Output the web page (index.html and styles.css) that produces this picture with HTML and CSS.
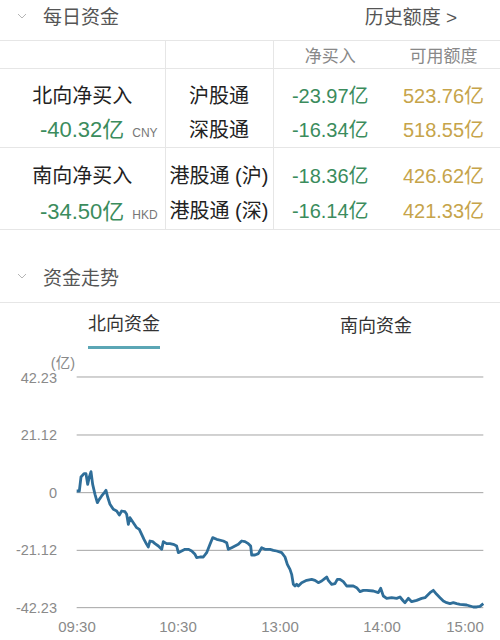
FILE: index.html
```html
<!DOCTYPE html>
<html lang="zh-CN">
<head>
    <meta charset="UTF-8">
    <meta name="viewport" content="width=device-width, initial-scale=1.0">
    <title>每日资金</title>
    <link rel="stylesheet" href="styles.css">
</head>
<body>
    <div class="section-head first">
        <svg class="chevron" width="10" height="6" viewBox="0 0 10 6"><polyline points="1,1 5,5 9,1"/></svg>
        <span class="title">每日资金</span>
        <span class="more">历史额度 &gt;</span>
    </div>

    <table class="flow">
        <colgroup>
            <col class="c1"><col class="c2"><col class="c3"><col class="c4">
        </colgroup>
        <thead>
            <tr>
                <th></th>
                <th></th>
                <th>净买入</th>
                <th>可用额度</th>
            </tr>
        </thead>
        <tbody>
            <tr class="north">
                <td class="dir">
                    <div>北向净买入</div>
                    <div class="green">-40.32亿<span class="cur">CNY</span></div>
                </td>
                <td class="name">
                    <div>沪股通</div>
                    <div>深股通</div>
                </td>
                <td class="green">
                    <div>-23.97亿</div>
                    <div>-16.34亿</div>
                </td>
                <td class="gold">
                    <div>523.76亿</div>
                    <div>518.55亿</div>
                </td>
            </tr>
            <tr class="south">
                <td class="dir">
                    <div>南向净买入</div>
                    <div class="green">-34.50亿<span class="cur">HKD</span></div>
                </td>
                <td class="name">
                    <div>港股通 (沪)</div>
                    <div>港股通 (深)</div>
                </td>
                <td class="green">
                    <div>-18.36亿</div>
                    <div>-16.14亿</div>
                </td>
                <td class="gold">
                    <div>426.62亿</div>
                    <div>421.33亿</div>
                </td>
            </tr>
        </tbody>
    </table>

    <div class="section-head second">
        <svg class="chevron" width="10" height="6" viewBox="0 0 10 6"><polyline points="1,1 5,5 9,1"/></svg>
        <span class="title">资金走势</span>
    </div>

    <div class="tabs">
        <div class="tab active"><span>北向资金</span></div>
        <div class="tab"><span>南向资金</span></div>
    </div>

    <svg class="chart" width="500" height="292" viewBox="0 0 500 292">
        <g class="grid" transform="translate(0 2) scale(0.33333)">
            <line x1="230" y1="78" x2="1450" y2="78"/>
            <line x1="230" y1="252" x2="1450" y2="252"/>
            <line x1="230" y1="425" x2="1450" y2="425"/>
            <line x1="230" y1="598" x2="1450" y2="598"/>
            <line x1="230" y1="770" x2="1450" y2="770"/>
            <polyline class="flowline" points="230,420 238,420 243,378 252,368 258,368 263,400 268,378 273,362 278,400 285,430 292,455 298,445 305,435 313,425 318,418 323,438 330,460 340,475 350,480 358,492 365,480 375,482 380,490 385,520 390,500 400,515 410,530 418,535 425,550 432,565 440,580 445,588 450,570 458,572 465,578 475,585 485,595 490,572 500,578 510,578 520,580 530,585 535,605 545,600 555,595 565,595 575,600 585,610 590,620 600,618 610,618 620,605 630,580 638,560 650,565 670,570 680,575 685,595 695,590 705,585 715,580 725,570 735,572 745,578 752,585 755,612 765,612 775,608 785,590 795,595 810,595 820,598 830,600 845,605 855,618 862,640 870,655 875,670 880,700 885,705 890,700 895,705 905,695 920,688 935,685 945,688 955,695 965,690 975,682 980,678 985,688 995,700 1005,698 1012,685 1020,685 1030,692 1040,705 1050,705 1060,705 1070,710 1080,722 1090,718 1100,718 1120,720 1135,725 1142,712 1150,735 1160,742 1175,740 1190,742 1200,738 1210,750 1215,755 1225,742 1235,752 1250,748 1265,742 1275,740 1290,725 1300,718 1310,730 1320,740 1330,750 1340,755 1350,758 1360,755 1370,758 1380,760 1400,762 1410,765 1420,768 1430,768 1440,766 1450,758"/>
        </g>
        <text class="unit" x="75" y="14">(亿)</text>
        <text class="ylabel" x="57" y="28.7">42.23</text>
        <text class="ylabel" x="57" y="86">21.12</text>
        <text class="ylabel" x="57" y="143.7">0</text>
        <text class="ylabel" x="57" y="201.3">-21.12</text>
        <text class="ylabel" x="57" y="258.7">-42.23</text>
        <text class="xlabel" x="77" y="277">09:30</text>
        <text class="xlabel" x="178" y="277">10:30</text>
        <text class="xlabel" x="280" y="277">13:00</text>
        <text class="xlabel" x="382" y="277">14:00</text>
        <text class="xlabel" x="465" y="277">15:00</text>
    </svg>
</body>
</html>
```

FILE: styles.css
```css
body {
    font-family: "Liberation Sans", "Noto Sans CJK SC", sans-serif;
    margin: 0;
    padding: 0;
    background-color: #fff;
    color: #222;
    overflow: hidden;
}

.section-head {
    display: flex;
    align-items: center;
    height: 48px;
    padding: 0 43px 0 17px;
    border-bottom: 1px solid #e6e6e6;
    box-sizing: border-box;
    color: #555;
    font-size: 19px;
}

.section-head.first {
    height: 41px;
    padding-bottom: 9px;
}

.section-head.second {
    margin-top: 24px;
    height: 49px;
    padding-bottom: 4px;
}

.chevron {
    margin-right: 16px;
}

.chevron polyline {
    fill: none;
    stroke: #b5b5b5;
    stroke-width: 1;
}

.section-head .more {
    margin-left: auto;
}

table.flow {
    width: 500px;
    border-collapse: collapse;
    table-layout: fixed;
}

col.c1 { width: 165px; }
col.c2 { width: 108px; }
col.c3 { width: 114px; }
col.c4 { width: 113px; }

table.flow th, table.flow td {
    padding: 0;
    text-align: center;
    border-bottom: 1px solid #e6e6e6;
    border-left: 1px solid #e6e6e6;
}

table.flow th:first-child, table.flow td:first-child {
    border-left: none;
}

table.flow th:nth-child(4), table.flow td:nth-child(4) {
    border-left: none;
}

table.flow th {
    height: 27px;
    font-weight: normal;
    font-size: 17px;
    color: #888;
    vertical-align: middle;
}

table.flow td {
    vertical-align: top;
    font-size: 20px;
}

table.flow td div {
    height: 34px;
    line-height: 34px;
    white-space: nowrap;
}

tr.north td {
    height: 78px;
    padding-top: 10px;
    box-sizing: border-box;
}

tr.south td {
    height: 81px;
    padding-top: 11px;
    box-sizing: border-box;
}

tr.south td div {
    height: 35px;
    line-height: 35px;
}

td.dir {
    padding-right: 4px;
    font-size: 22px;
}

td.dir .green {
    font-size: 22px;
}

td.name {
    font-size: 22px;
}

.cur {
    margin-left: 8px;
    margin-right: -33px;
    font-size: 12px;
    line-height: 1;
    color: #777;
}

.green {
    color: #3b8c5d;
}

.gold {
    color: #c6a44a;
}

.tabs {
    display: flex;
    height: 46px;
}

.tab {
    flex: 1;
    display: flex;
    justify-content: center;
    align-items: center;
    font-size: 18px;
    color: #333;
}

.tab span {
    height: 46px;
    line-height: 46px;
    box-sizing: border-box;
}

.tab.active span {
    border-bottom: 3px solid #5ba6b5;
    line-height: 43px;
}

.tab:first-child {
    margin-right: 4px;
}

.chart {
    display: block;
}

.grid line {
    stroke: #a4a4a4;
    stroke-width: 1;
    vector-effect: non-scaling-stroke;
}

.flowline {
    fill: none;
    stroke: #2f6e99;
    stroke-width: 2.8;
    stroke-linejoin: round;
    vector-effect: non-scaling-stroke;
}

.chart text {
    font-family: "Liberation Sans", "Noto Sans CJK SC", sans-serif;
    fill: #8a8a8a;
    dominant-baseline: central;
}

.ylabel, .unit {
    font-size: 14.5px;
    text-anchor: end;
}

.xlabel {
    font-size: 15px;
    text-anchor: middle;
}
```
